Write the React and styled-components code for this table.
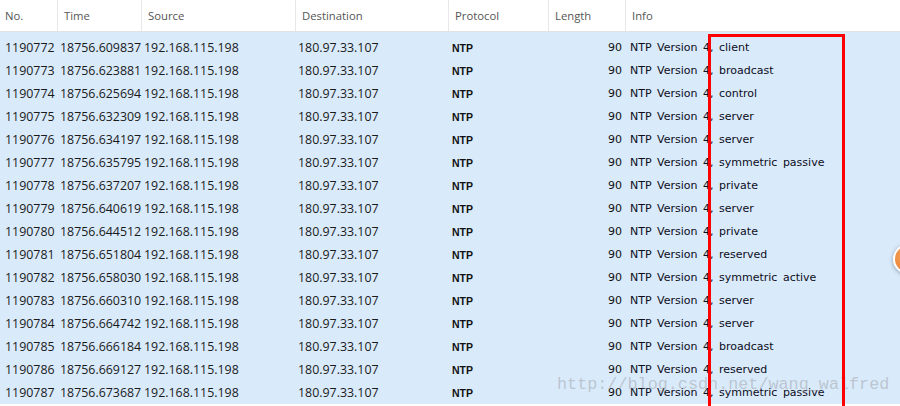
import React from "react";
import styled, { createGlobalStyle } from "styled-components";

const Global = createGlobalStyle`
  html, body { margin: 0; padding: 0; background: #fff; }
  body { width: 900px; height: 406px; overflow: hidden; }
`;

const COLS = "57px 84px 154px 153px 100px 77px 275px";

const Page = styled.div`
  position: relative;
  width: 900px;
  height: 406px;
  overflow: hidden;
  background: #fff;
`;

const Header = styled.div`
  display: grid;
  grid-template-columns: ${COLS};
  height: 31px;
  border-bottom: 1px solid #e2e2e2;
  box-sizing: content-box;
  background: #fff;
`;

const HeadCell = styled.div`
  display: flex;
  align-items: center;
  padding-left: ${(p) => (p.$first ? 5 : 6)}px;
  font-family: "Open Sans", "Liberation Sans", sans-serif;
  font-size: 11.3px;
  color: #555;
  border-left: ${(p) => (p.$first ? "none" : "1px solid #e8e8e8")};
  box-sizing: border-box;
`;

const Body = styled.div`
  background: #d9eafb;
  padding-top: 4px;
  height: 372px;
  box-sizing: border-box;
`;

const Row = styled.div`
  display: grid;
  grid-template-columns: ${COLS};
  height: 23px;
  align-items: center;
  color: #1a1a1a;
`;

const Cell = styled.div`
  font-family: "Open Sans", "Liberation Sans", sans-serif;
  font-size: 12.4px;
  white-space: nowrap;
  padding-left: ${(p) => p.$pl ?? 3}px;
`;

const ProtoCell = styled.div`
  font-family: "Liberation Sans", Arial, sans-serif;
  font-weight: bold;
  font-size: 10.5px;
  padding-left: 4px;
  color: #111;
`;

const LenCell = styled.div`
  font-family: "DejaVu Sans", Verdana, sans-serif;
  font-size: 11px;
  text-align: right;
  padding-right: 3px;
  color: #111;
`;

const InfoCell = styled.div`
  font-family: "DejaVu Sans", Verdana, sans-serif;
  font-size: 11px;
  word-spacing: 2px;
  padding-left: 5px;
  white-space: nowrap;
  color: #0d0d1a;
`;

const Highlight = styled.div`
  position: absolute;
  left: 708px;
  top: 34px;
  width: 137px;
  height: 380px;
  border: 3px solid #ff0000;
  box-sizing: border-box;
  pointer-events: none;
`;

const Watermark = styled.div`
  position: absolute;
  left: 557px;
  top: 375px;
  font-family: "Liberation Mono", "DejaVu Sans Mono", monospace;
  font-size: 16.8px;
  color: rgba(140, 140, 140, 0.4);
  white-space: nowrap;
  pointer-events: none;
`;

const Knob = styled.div`
  position: absolute;
  left: 893px;
  top: 244px;
  width: 26px;
  height: 26px;
  border-radius: 50%;
  background: radial-gradient(circle at 40% 40%, #f6a45a, #e2772a);
  border: 2px solid #fff;
  box-shadow: 0 1px 4px rgba(0, 0, 0, 0.35);
`;

const rows = [
  ["1190772", "18756.609837", "client"],
  ["1190773", "18756.623881", "broadcast"],
  ["1190774", "18756.625694", "control"],
  ["1190775", "18756.632309", "server"],
  ["1190776", "18756.634197", "server"],
  ["1190777", "18756.635795", "symmetric passive"],
  ["1190778", "18756.637207", "private"],
  ["1190779", "18756.640619", "server"],
  ["1190780", "18756.644512", "private"],
  ["1190781", "18756.651804", "reserved"],
  ["1190782", "18756.658030", "symmetric active"],
  ["1190783", "18756.660310", "server"],
  ["1190784", "18756.664742", "server"],
  ["1190785", "18756.666184", "broadcast"],
  ["1190786", "18756.669127", "reserved"],
  ["1190787", "18756.673687", "symmetric passive"],
];

const headers = ["No.", "Time", "Source", "Destination", "Protocol", "Length", "Info"];

export default function App() {
  return (
    <Page>
      <Global />
      <Header>
        {headers.map((h, i) => (
          <HeadCell key={h} $first={i === 0}>
            {h}
          </HeadCell>
        ))}
      </Header>
      <Body>
        {rows.map(([no, time, kind]) => (
          <Row key={no}>
            <Cell $pl={5}>{no}</Cell>
            <Cell>{time}</Cell>
            <Cell>192.168.115.198</Cell>
            <Cell>180.97.33.107</Cell>
            <ProtoCell>NTP</ProtoCell>
            <LenCell>90</LenCell>
            <InfoCell>NTP Version 4, {kind}</InfoCell>
          </Row>
        ))}
      </Body>
      <Watermark>http://blog.csdn.net/wang_walfred</Watermark>
      <Highlight />
      <Knob />
    </Page>
  );
}
